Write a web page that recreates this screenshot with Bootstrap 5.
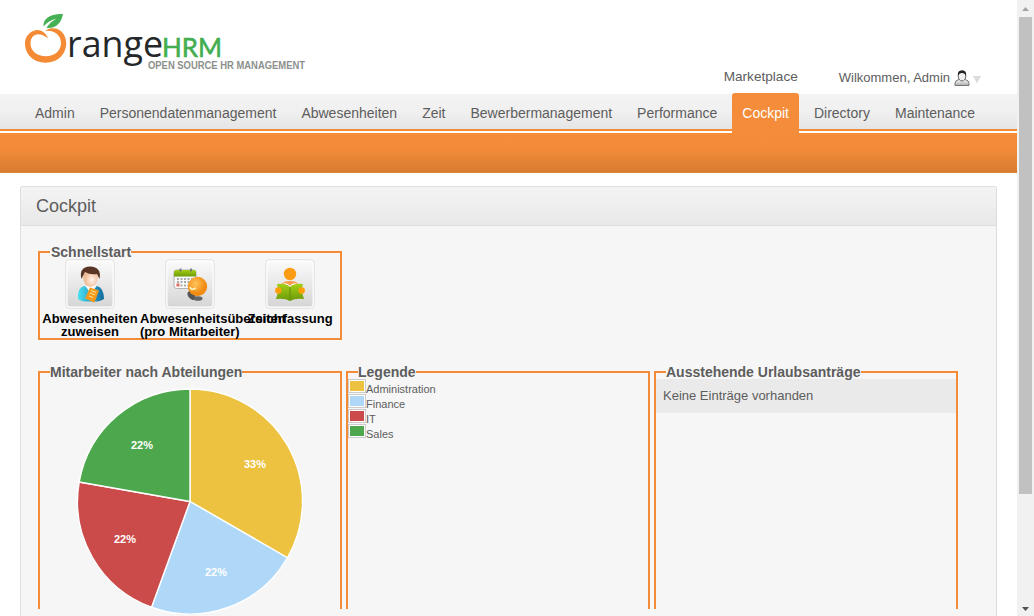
<!DOCTYPE html>
<html lang="de">
<head>
<meta charset="utf-8">
<title>OrangeHRM</title>
<link rel="stylesheet" href="https://cdn.jsdelivr.net/npm/bootstrap@5.3.0/dist/css/bootstrap.min.css">
<style>
body{font-family:"Liberation Sans",Arial,sans-serif;font-size:14px;line-height:16px;color:#5d5d5d;background:#fff;height:616px}
svg{display:block}
.main-col{width:1017px}
.top-bar{height:94px}
.logo{margin:10px 0 0 20px}
.top-link{margin-top:69px}
.market{font-size:13.6px}
.welcome{margin-right:36px}
.wtext{margin:1px 4px 0 1px;font-size:13px}
.usericon{margin-top:1px}
.caret{margin:7px 0 0 3px}
.menu-bar{height:39px;padding-left:25px;background:linear-gradient(#f3f3f3,#f0f0f0 50%,#e5e5e5) 0 0/100% 35px no-repeat,linear-gradient(#f28c38,#f28c38) 0 35px/100% 2px no-repeat}
.menu-bar .nav-link{padding:11px 10px 0;margin-right:5px;height:39px;color:#5d5d5d;white-space:nowrap}
.menu-bar .nav-link.active{background:#f48c39;color:#fff;height:40px;margin-top:-1px;padding-top:12px;border-radius:3px 3px 0 0}
.sub-bar{height:40px;background:linear-gradient(#f58c39 0,#f28b38 40%,#d97c30 97%,#df8a45 100%)}
.panel{margin:13px 20px 0;border:1px solid #dedede;border-bottom:0;border-radius:3px 3px 0 0;height:430px;background:#f6f6f6;overflow:hidden}
.panel-head{height:39px;padding:9px 15px;border-bottom:1px solid #dedede;background:linear-gradient(#f4f4f4,#e8e8e8);border-radius:3px 3px 0 0}
.panel-head h1{font-size:18px;line-height:20px;font-weight:400;margin:0}
.panel-body{padding:18px 17px 0}
.box{width:304px;border:2px solid #f28c38;margin-top:7px}
.box-title{float:none;width:max-content;font-size:14px;line-height:16px;font-weight:700;margin:-9px 0 0 10px;background:#f6f6f6;white-space:nowrap}
.quick{height:89px}
.quick .box-title{padding-left:1px}
.quick-item{width:100px;color:#000;font-weight:700;font-size:13px;line-height:13px;text-align:center;white-space:nowrap}
.quick-item svg{margin:-1px auto 3px}
.row2{margin-top:24px}
.tall{height:238px;border-bottom:0}
.tall .box-title{margin-bottom:-1px}
.key{font-size:11px;height:15px}
.swatch{width:18px;height:14px;border:1px solid #ccc;padding:1px;background:#fff}
.swatch i{display:block;height:10px}
.key span{line-height:13px;padding-top:4px}
.none-row{background:#eaeaea;height:34px;padding:9px 7px;font-size:13px}
.scroll{width:17px;height:616px;background:#f1f1f1}
.thumb{width:13px;height:477px;background:#c1c1c1}
</style>
<script src="https://cdn.jsdelivr.net/npm/bootstrap@5.3.0/dist/js/bootstrap.bundle.min.js"></script>
</head>
<body class="d-flex overflow-hidden">
<svg width="0" height="0" class="position-absolute"><defs>
<linearGradient id="btn" x2="0" y2="1"><stop stop-color="#fafafa"/><stop offset="1" stop-color="#d6d6d6"/></linearGradient>
<linearGradient id="grn" x2="0" y2="1"><stop stop-color="#a5cf16"/><stop offset="1" stop-color="#6c9909"/></linearGradient>
<linearGradient id="teal"><stop stop-color="#4be0f2"/><stop offset="1" stop-color="#116a9d"/></linearGradient>
<radialGradient id="face" cx=".6" cy=".6"><stop stop-color="#fff3ea"/><stop offset="1" stop-color="#eeb993"/></radialGradient>
<radialGradient id="ora" cx=".4" cy=".35"><stop stop-color="#ffc55c"/><stop offset="1" stop-color="#f28b12"/></radialGradient>
<linearGradient id="usr" x2="0" y2="1"><stop stop-color="#fff"/><stop offset="1" stop-color="#aaa"/></linearGradient>
</defs></svg>
<div class="main-col flex-shrink-0">
  <header class="top-bar d-flex">
    <svg class="logo" width="290" height="64" viewBox="20 10 290 64">
      <path d="M43.500 26.500C43 18.500 50 13.500 63 14C61 24 55 29 46.500 27.800C50 22.500 53 20.500 57 18.500C51 20 47 22.500 43.500 26.500Z" fill="#46b154"/>
      <path fill="#f58a35" d="M48 38.500C46 32.500 41 29.500 36.500 30C29 31.500 25 37 25 43.500C25 54.500 34 62.700 45.500 62.700C57.500 62.700 66.200 54.500 66.200 43C66.200 34 59.500 28 52.500 28.300C49.500 28.400 47 29.500 45 31C53 29.800 61 34.500 61 43C61 51 54 56.300 46 56.300C37 56.300 30.500 51 30.500 43.500C30.500 35 38 30.500 48 38.500Z"/>
      <text x="67" y="56.500" font-family="Open Sans" font-size="37" fill="#25282a" textLength="96" lengthAdjust="spacingAndGlyphs">range</text>
      <text x="162" y="56.500" font-family="Lato" font-size="27.500" font-weight="400" fill="#43ae50" stroke="#43ae50" stroke-width=".6" textLength="60" lengthAdjust="spacingAndGlyphs">HRM</text>
      <text x="148" y="69" font-family="Liberation Sans" font-size="10.300" font-weight="700" fill="#8c8f8c" textLength="157" lengthAdjust="spacingAndGlyphs">OPEN SOURCE HR MANAGEMENT</text>
    </svg>
    <div class="d-flex ms-auto">
      <span class="top-link market">Marketplace</span>
      <span class="top-link ms-4 ps-3 d-flex welcome"><span class="wtext">Wilkommen, Admin</span>
        <svg class="usericon" width="16" height="17" viewBox="0 0 16 17"><path d="M1 15.500V13Q1 10.500 5 9.500H11Q15 10.500 15 13V15.500Z" fill="url(#usr)" stroke="#777"/><ellipse cx="8" cy="6.200" rx="3.800" ry="4.800" fill="#f0f0f0" stroke="#666"/><path d="M4 6Q3 .500 8 .300Q13 .500 12 6Q11 3 8 3Q5 3 4 6Z" fill="#222"/></svg>
        <svg class="caret" width="8" height="8" viewBox="0 0 8 8"><path d="M0 0H8L4 7.500Z" fill="#dcdcdc"/></svg>
      </span>
    </div>
  </header>
  <nav class="menu-bar nav flex-nowrap">
    <a class="nav-link">Admin</a><a class="nav-link">Personendatenmanagement</a><a class="nav-link">Abwesenheiten</a><a class="nav-link">Zeit</a><a class="nav-link">Bewerbermanagement</a><a class="nav-link">Performance</a><a class="nav-link active">Cockpit</a><a class="nav-link">Directory</a><a class="nav-link">Maintenance</a>
  </nav>
  <div class="sub-bar"></div>
  <main class="panel">
    <div class="panel-head"><h1>Cockpit</h1></div>
    <div class="panel-body">
      <section class="box quick">
        <h2 class="box-title">Schnellstart</h2>
        <div class="d-flex">
          <div class="quick-item"><svg width="50" height="50" viewBox="0 0 50 50"><rect x=".75" y=".75" width="48.500" height="48.500" rx="3.500" fill="#fff" stroke="#dfdfdc"/><rect x="2.500" y="2.500" width="45" height="45" rx="2.500" fill="url(#btn)"/>
            <path d="M13 40Q12 29 19 27L25 29L32 27Q39 29 39 40Q35 43 26 42.500Q16 43 13 40Z" fill="url(#teal)"/><path d="M20.500 27L26 35L31.500 27Z" fill="#fff"/><ellipse cx="25.500" cy="19" rx="7.200" ry="9" fill="url(#face)"/><path d="M16.500 20Q13.500 8 25 7.500Q37 8 34.500 20L32 15Q25 16 20 13Z" fill="#593526"/><path d="M25 28.500L34 31.500L29.500 43.500L20 39.500Z" fill="#f59a1b"/><path d="M26 31.500L31 33.500M25 34L30 36M24 37L28 38.500" stroke="#ffe39c"/></svg>Abwesenheiten<br>zuweisen</div>
          <div class="quick-item"><svg width="50" height="50" viewBox="0 0 50 50"><rect x=".75" y=".75" width="48.500" height="48.500" rx="3.500" fill="#fff" stroke="#dfdfdc"/><rect x="2.500" y="2.500" width="45" height="45" rx="2.500" fill="url(#btn)"/>
            <rect x="9" y="11" width="22" height="18.500" rx="2.500" fill="#fafafa" stroke="#b0b0b0"/><path d="M9 17.500V13Q9 11 12 11H28Q31 11 31 13V17.500Z" fill="url(#grn)"/><path d="M15.500 9.500V12.500M26 9.500V12.500" stroke="#777" stroke-width="1.800"/><path d="M12 20H29M12 23H27M15.500 26.500H23" stroke="#aaa" stroke-width="1.800" stroke-dasharray="2 1.500"/><path d="M11.500 26H14.500" stroke="#df6b62" stroke-width="3"/><ellipse cx="26.500" cy="36.500" rx="5" ry="3.300" transform="rotate(50 26.500 36.500)" fill="#555"/><ellipse cx="33" cy="39.500" rx="4.500" ry="2.300" fill="#666"/><circle cx="32.500" cy="27.500" r="9.700" fill="url(#ora)"/><path d="M25 28Q26 32 31 29" stroke="#fff2bd" stroke-width="1.800" fill="none"/></svg><div class="text-start">Abwesenheitsübersicht<br>(pro Mitarbeiter)</div></div>
          <div class="quick-item"><svg width="50" height="50" viewBox="0 0 50 50"><rect x=".75" y=".75" width="48.500" height="48.500" rx="3.500" fill="#fff" stroke="#dfdfdc"/><rect x="2.500" y="2.500" width="45" height="45" rx="2.500" fill="url(#btn)"/>
            <circle cx="25" cy="15" r="6.200" fill="#fb9c14"/><path d="M17 25Q18 22 25 22Q32 22 33 25L25 27Z" fill="#fb9c4a"/><path d="M18 24.500Q23 23.500 25 27Q27 23.500 32 24.500L25 28Z" fill="#fff"/><path d="M12 25Q21 24 25 28Q29 24 38 25L36.500 32L39 40Q30 39 25 42Q20 39 11 40L13.500 32Z" fill="url(#grn)"/><path d="M25 28V41" stroke="#64900a"/><circle cx="13.300" cy="31.500" r="3.200" fill="#ff9d0a"/><circle cx="36.700" cy="31.500" r="3.200" fill="#ff9d0a"/></svg>Zeiterfassung</div>
        </div>
      </section>
      <div class="d-flex gap-1 row2">
        <section class="box tall">
          <h2 class="box-title">Mitarbeiter nach Abteilungen</h2>
          <svg width="300" height="235" viewBox="40 379 300 235">
            <g stroke="#fff" stroke-width="1.400" stroke-linejoin="round">
            <path d="M190 501.500V389A112.500 112.500 0 0 1 287.430 557.750Z" fill="#edc240"/>
            <path d="M190 501.500L287.430 557.750A112.500 112.500 0 0 1 151.520 607.220Z" fill="#afd8f8"/>
            <path d="M190 501.500L151.520 607.220A112.500 112.500 0 0 1 79.210 481.960Z" fill="#cb4b4b"/>
            <path d="M190 501.500L79.210 481.960A112.500 112.500 0 0 1 190 389Z" fill="#4da74d"/></g>
            <g font-family="Liberation Sans" font-size="11" font-weight="700" fill="#fff" text-anchor="middle"><text x="255" y="468">33%</text><text x="216" y="576">22%</text><text x="125" y="543">22%</text><text x="142" y="449">22%</text></g>
          </svg>
        </section>
        <section class="box tall">
          <h2 class="box-title">Legende</h2>
          <div class="key d-flex"><div class="swatch"><i style="background:#edc240"></i></div><span>Administration</span></div>
          <div class="key d-flex"><div class="swatch"><i style="background:#afd8f8"></i></div><span>Finance</span></div>
          <div class="key d-flex"><div class="swatch"><i style="background:#cb4b4b"></i></div><span>IT</span></div>
          <div class="key d-flex"><div class="swatch"><i style="background:#4da74d"></i></div><span>Sales</span></div>
        </section>
        <section class="box tall">
          <h2 class="box-title">Ausstehende Urlaubsanträge</h2>
          <div class="none-row">Keine Einträge vorhanden</div>
        </section>
      </div>
    </div>
  </main>
</div>
<div class="scroll d-flex flex-column align-items-center flex-shrink-0">
  <svg width="17" height="17" viewBox="0 0 17 17"><path d="M5 11L8.500 7L12 11Z" fill="#a3a3a3"/></svg>
  <div class="thumb"></div>
  <svg class="mt-auto" width="17" height="17" viewBox="0 0 17 17"><path d="M5 8L8.500 12L12 8Z" fill="#505050"/></svg>
</div>
</body>
</html>
